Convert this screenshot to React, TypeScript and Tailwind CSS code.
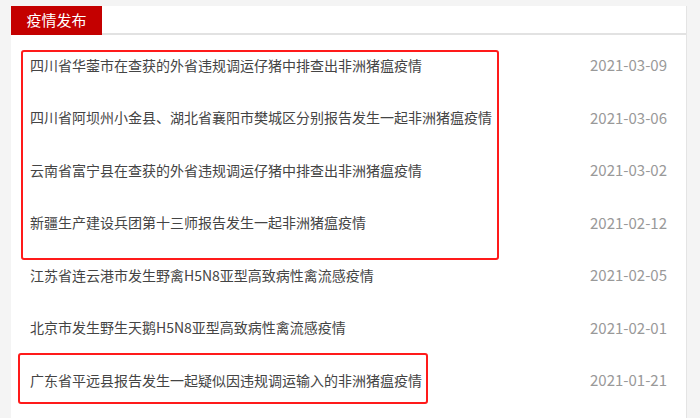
const items = [
  { title: '四川省华蓥市在查获的外省违规调运仔猪中排查出非洲猪瘟疫情', date: '2021-03-09' },
  { title: '四川省阿坝州小金县、湖北省襄阳市樊城区分别报告发生一起非洲猪瘟疫情', date: '2021-03-06' },
  { title: '云南省富宁县在查获的外省违规调运仔猪中排查出非洲猪瘟疫情', date: '2021-03-02' },
  { title: '新疆生产建设兵团第十三师报告发生一起非洲猪瘟疫情', date: '2021-02-12' },
  { title: '江苏省连云港市发生野禽H5N8亚型高致病性禽流感疫情', date: '2021-02-05' },
  { title: '北京市发生野生天鹅H5N8亚型高致病性禽流感疫情', date: '2021-02-01' },
  { title: '广东省平远县报告发生一起疑似因违规调运输入的非洲猪瘟疫情', date: '2021-01-21' },
];

export default function App() {
  return (
    <div
      className="w-[700px] h-[418px] overflow-hidden bg-[#f4f4f4] pt-[6px] pl-[11px] pr-[13px]"
      style={{ fontFamily: '"Microsoft YaHei", "Noto Sans CJK SC", "Noto Sans", sans-serif' }}
    >
      <div className="relative h-[420px] bg-white border-r border-[#e4e4e4]">
        <div className="flex h-[29px] border-b-2 border-[#e2e2e2]">
          <div className="w-[91px] h-[29px] bg-[#c40000] text-white text-[15px] flex items-center justify-center">
            疫情发布
          </div>
        </div>
        <ul className="pt-[4px]">
          {items.map((item) => (
            <li key={item.date} className="h-[52.5px] flex items-center justify-between pl-[19px] pr-[19px]">
              <span className="text-[14px] text-[#444]">{item.title}</span>
              <span className="text-[15px] text-[#999]">{item.date}</span>
            </li>
          ))}
        </ul>

        {/* annotation boxes */}
        <div className="absolute left-[10px] top-[44px] w-[478px] h-[210px] border-2 border-[#ff1a1a] rounded-[3px]" />
        <div className="absolute left-[7px] top-[347px] w-[410px] h-[51px] border-2 border-[#ff1a1a] rounded-[3px]" />
      </div>
    </div>
  );
}
